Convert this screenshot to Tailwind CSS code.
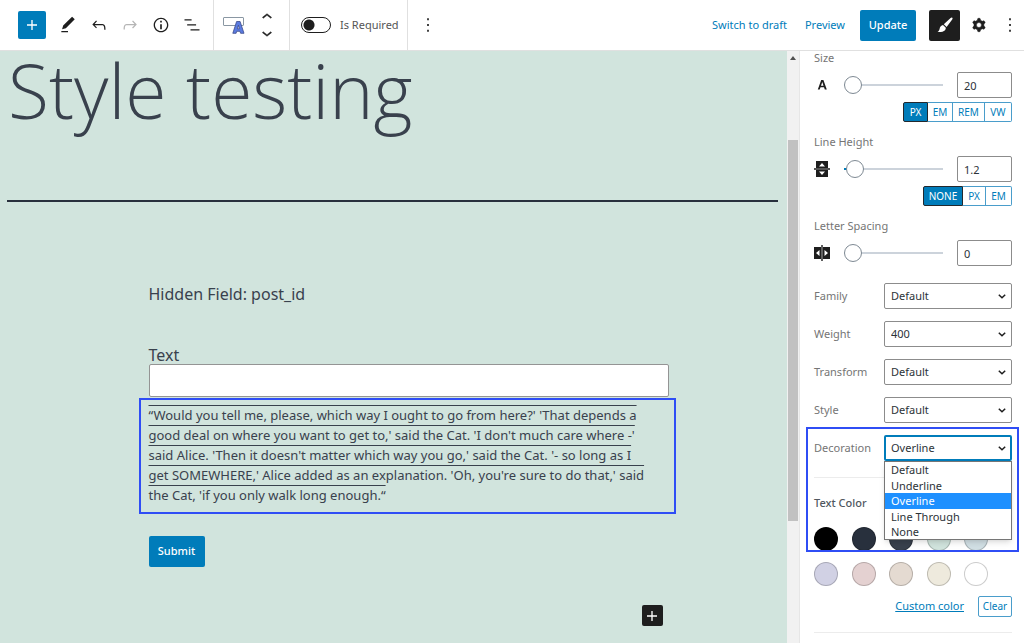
<!DOCTYPE html>
<html lang="en">
<head>
<meta charset="utf-8">
<title>Style testing</title>
<script src="https://cdn.jsdelivr.net/npm/@tailwindcss/browser@4"></script>
</head>
<body class="flex h-screen flex-col overflow-hidden bg-white font-['Noto_Sans','Open_Sans',sans-serif] text-[11px] text-[#1e1e1e]">

<header class="flex h-[51px] shrink-0 items-stretch border-b border-[#e0e0e0]">
  <div class="flex items-center pl-[18px] pr-[11px]">
    <button aria-label="Add block" class="mr-3 flex h-7 w-7 items-center justify-center rounded-[2px] bg-[#007cba] text-white">
      <svg class="h-5 w-5" viewBox="0 0 24 24" fill="currentColor"><path d="M18 11.2h-5.2V6h-1.6v5.2H6v1.6h5.2V18h1.6v-5.2H18z"/></svg>
    </button>
    <div class="flex items-center gap-[11px]">
      <button aria-label="Tools"><svg class="block h-5 w-5" viewBox="0 0 24 24" fill="currentColor"><path d="M20.1 5.1L16.9 2 6.2 12.7l-1.3 4.4 4.5-1.3L20.1 5.1zM4 20.8h8v-1.5H4v1.5z"/></svg></button>
      <button aria-label="Undo"><svg class="block h-5 w-5" viewBox="0 0 24 24" fill="currentColor"><path d="M18.3 11.7c-.6-.6-1.4-.9-2.3-.9H6.7l2.9-3.3-1.1-1-4.5 5L8.5 16l1-1-2.7-2.7H16c.5 0 .9.2 1.3.5 1 1 1 3.4 1 4.5v.3h1.5v-.2c0-1.5 0-4.3-1.5-5.7z"/></svg></button>
      <button aria-label="Redo" disabled class="text-[#b5b5b5]"><svg class="block h-5 w-5" viewBox="0 0 24 24" fill="currentColor"><path d="M15.6 6.5l-1.1 1 2.9 3.3H8c-.9 0-1.7.3-2.3.9-1.4 1.5-1.4 4.2-1.4 5.6v.2h1.5v-.3c0-1.1 0-3.5 1-4.5.3-.3.7-.5 1.3-.5h9.2L14.5 15l1.1 1.1 4.6-4.6-4.6-5z"/></svg></button>
      <button aria-label="Details"><svg class="block h-5 w-5" viewBox="0 0 24 24" fill="currentColor"><path d="M12 3.2c-4.8 0-8.8 3.9-8.8 8.8 0 4.8 3.9 8.8 8.8 8.8 4.8 0 8.8-3.9 8.8-8.8 0-4.8-4-8.8-8.8-8.8zm0 16c-4 0-7.2-3.3-7.2-7.2C4.8 8 8 4.8 12 4.8s7.2 3.3 7.2 7.2c0 4-3.2 7.2-7.2 7.2zM11 17h2v-6h-2v6zm0-8h2V7h-2v2z"/></svg></button>
      <button aria-label="List view"><svg class="block h-5 w-5" viewBox="0 0 24 24" fill="currentColor"><path d="M11.5 5.2H3v1.5h8.500V5.2zm-1.300 12v1.500H21v-1.500H10.200zm6.700-6H6.200v1.500h10.700v-1.500z"/></svg></button>
    </div>
  </div>
  <div class="flex items-center gap-3 border-l border-[#e0e0e0] pl-[9px] pr-3">
    <button aria-label="Text field"><svg class="block h-[18px] w-[22px]" viewBox="0 0 22 18"><rect x=".5" y="1.500" width="20" height="8" rx=".5" fill="#fff" stroke="#8a97a3"/><path fill="#5b7be0" stroke="#3b4a8a" stroke-width=".8" d="M9.800 17.300 13.600 5.500h3.500l3.900 11.800h-3.400l-.6-2h-3.300l-.6 2zM14.400 12.800h2l-1-3.500z"/></svg></button>
    <div class="flex flex-col">
      <button aria-label="Move up" class="h-4"><svg class="block h-5 w-5 -my-0.5" viewBox="0 0 24 24" fill="currentColor"><path d="M6.500 12.400L12 8l5.500 4.400-.9 1.200L12 10l-4.500 3.600-1-1.200z" stroke="currentColor" stroke-width=".5"/></svg></button>
      <button aria-label="Move down" class="h-4"><svg class="block h-5 w-5 -my-0.5" viewBox="0 0 24 24" fill="currentColor"><path d="M17.500 11.600L12 16l-5.500-4.400.9-1.200L12 14l4.500-3.600 1 1.200z" stroke="currentColor" stroke-width=".5"/></svg></button>
    </div>
  </div>
  <label class="flex items-center gap-[9px] border-l border-[#e0e0e0] pl-[11px] pr-2 text-[#555]">
    <input type="checkbox" role="switch" class="h-4 w-[30px] appearance-none rounded-full border border-[#1e1e1e] bg-[radial-gradient(circle_at_7px_7px,#1e1e1e_5px,transparent_6px)]">
    <span>Is Required</span>
  </label>
  <div class="flex items-center border-l border-[#e0e0e0] pl-[10px]">
    <button aria-label="Block options"><svg class="block h-5 w-5" viewBox="0 0 24 24" fill="currentColor"><path d="M11 4h2v2.300h-2zM11 10.900h2v2.200h-2zM11 17.700h2V20h-2z"/></svg></button>
  </div>
  <div class="ml-auto flex items-center pr-1">
    <button class="mr-[18px] text-[#007cba]">Switch to draft</button>
    <a href="#" class="mr-[15px] text-[#007cba]">Preview</a>
    <button class="mr-[13px] h-[31px] w-14 rounded-[2px] bg-[#007cba] font-medium text-white">Update</button>
    <button aria-label="Styles" class="mr-[9px] flex h-[31px] w-[31px] items-center justify-center rounded-[2px] bg-[#1e1e1e] text-white">
      <svg class="h-4 w-4" viewBox="0 0 16 16" fill="currentColor"><path d="M15.300.7c.5.5.3 1.100-.1 1.700L9.600 10 6.800 7.300 13.600.9c.6-.5 1.200-.7 1.700-.2zM6 8l2.800 2.800c.2 1.700-1.200 3.500-3.300 3.900-1.700.4-3.600.3-5 .3 1.200-.7 1.700-1.400 2-2.700C2.900 9.800 4.300 8.200 6 8z"/></svg>
    </button>
    <button aria-label="Settings" class="mr-[11px]"><svg class="block h-5 w-5" viewBox="0 0 24 24" fill="currentColor" fill-rule="evenodd" stroke="currentColor" stroke-width=".6"><path d="M10.289 4.836A1 1 0 0111.275 4h1.306a1 1 0 01.987.836l.244 1.466c.787.26 1.503.679 2.108 1.218l1.393-.522a1 1 0 011.216.437l.653 1.130a1 1 0 01-.23 1.273l-1.148.944a6.025 6.025 0 010 2.435l1.149.946a1 1 0 01.23 1.272l-.653 1.130a1 1 0 01-1.216.437l-1.394-.522c-.605.54-1.320.958-2.108 1.218l-.244 1.466a1 1 0 01-.987.836h-1.306a1 1 0 01-.986-.836l-.244-1.466a5.995 5.995 0 01-2.108-1.218l-1.394.522a1 1 0 01-1.217-.436l-.653-1.131a1 1 0 01.23-1.272l1.149-.946a6.026 6.026 0 010-2.435l-1.148-.944a1 1 0 01-.23-1.272l.653-1.131a1 1 0 011.217-.437l1.393.522a5.994 5.994 0 012.108-1.218l.244-1.466zM14.929 12a3 3 0 11-6 0 3 3 0 016 0z"/></svg></button>
    <button aria-label="Options"><svg class="block h-5 w-5" viewBox="0 0 24 24" fill="currentColor"><path d="M11 4h2v2.300h-2zM11 10.900h2v2.200h-2zM11 17.700h2V20h-2z"/></svg></button>
  </div>
</header>

<div class="flex min-h-0 flex-1">
  <main class="min-w-0 flex-1 bg-[#d1e4dd] pl-[7px] pr-[9px] text-[#39414d]">
    <h1 class="h-[149px] pl-px font-['Open_Sans',sans-serif] text-[75px] font-light leading-[78px]">Style testing</h1>
    <hr class="border-t-2 border-[#28303d]">
    <div class="pl-8">
    <form class="mx-auto w-[520px] pt-[80px]">
      <p class="text-[16px] leading-6">Hidden Field: post_id</p>
      <label for="text" class="mt-[38px] block text-[16px] leading-[22px]">Text</label>
      <input id="text" type="text" class="-mt-[2px] block h-[33px] w-full rounded-[2px] border border-[#949494] bg-white px-2">
      <div class="-ml-[10px] -mr-[7px] mt-px border-2 border-[#2f4df5] pb-[7px] pl-2 pt-[5px]">
        <p class="whitespace-nowrap text-[13px] leading-5 overline">“Would you tell me, please, which way I ought to go from here?' 'That depends a<br>good deal on where you want to get to,' said the Cat. 'I don't much care where -'<br>said Alice. 'Then it doesn't matter which way you go,' said the Cat. '- so long as I<br>get SOMEWHERE,' Alice added as an explanation. 'Oh, you're sure to do that,' said<br>the Cat, 'if you only walk long enough.“</p>
      </div>
      <button type="button" class="mt-[22px] block h-[31px] w-14 rounded-[2px] bg-[#007cba] text-[11px] font-medium text-white">Submit</button>
      <button type="button" aria-label="Add block" class="ml-auto mr-[6px] mt-[38px] flex h-[21px] w-[21px] items-center justify-center rounded-[2px] bg-[#1e1e1e] text-white">
        <svg class="h-5 w-5" viewBox="0 0 24 24" fill="currentColor"><path d="M18 11.200h-5.200V6h-1.600v5.200H6v1.600h5.200V18h1.600v-5.200H18z"/></svg>
      </button>
    </form>
    </div>
  </main>

  <div aria-hidden="true" class="flex w-[13px] shrink-0 flex-col items-center border-r border-[#e6e6e6] bg-[#f1f1f1]">
    <svg class="mt-[5px] h-1 w-[6px]" viewBox="0 0 6 4" fill="#505050"><path d="M3 0l3 4H0z"/></svg>
    <div class="mt-20 h-[381px] w-[10px] bg-[#c1c1c1]"></div>
  </div>

  <aside class="w-[224px] shrink-0 overflow-hidden pl-[14px] pr-3 text-[#757575]">
    <section>
      <label for="size" class="block h-[14px] leading-[14px]">Size</label>
      <div class="mt-[7px] flex h-[26px] items-center">
        <svg class="mr-[14px] h-4 w-4" viewBox="0 0 16 16" fill="#1e1e1e"><path d="M3.800 12.500 7.200 3h2.200l3.400 9.500h-2l-.8-2.300H6.500l-.8 2.300zM7 8.700h2.500L8.300 5z"/></svg>
        <input type="range" aria-label="Size slider" min="0" max="1000" value="2" class="h-[18px] w-[99px] appearance-none bg-[linear-gradient(#ccd3db,#ccd3db)] bg-[length:100%_2px] bg-center bg-no-repeat [&::-webkit-slider-thumb]:h-[18px] [&::-webkit-slider-thumb]:w-[18px] [&::-webkit-slider-thumb]:appearance-none [&::-webkit-slider-thumb]:rounded-full [&::-webkit-slider-thumb]:border [&::-webkit-slider-thumb]:border-[#7e8993] [&::-webkit-slider-thumb]:bg-white">
        <input id="size" type="text" value="20" class="ml-auto h-[26px] w-[55px] rounded-[2px] border border-[#8c8c8c] px-[6px] text-[#2c3338]">
      </div>
      <div class="mt-1 flex h-5 justify-end text-[10px] text-[#007cba]">
        <button class="w-[25px] rounded-l-[2px] border border-[#23282d] bg-[#007cba] text-white">PX</button>
        <button class="w-[25px] border-y border-r border-[#4a9dcb]">EM</button>
        <button class="w-8 border-y border-r border-[#4a9dcb]">REM</button>
        <button class="w-[27px] rounded-r-[2px] border-y border-r border-[#4a9dcb]">VW</button>
      </div>
    </section>
    <section class="mt-[13px]">
      <label for="lh" class="block h-[14px] leading-[14px]">Line Height</label>
      <div class="mt-[7px] flex h-[26px] items-center">
        <svg class="mr-[14px] h-4 w-4" viewBox="0 0 16 16"><path fill="#1e1e1e" d="M2 0h12v7H2zM2 9h12v7H2zM0 7.300h16v1.400H0z"/><path fill="#fff" d="M8 2l3 3.500H5zM8 14l3-3.500H5z"/></svg>
        <input type="range" aria-label="Line height slider" min="0" max="100" value="2" class="h-[18px] w-[99px] appearance-none bg-[linear-gradient(90deg,#007cba_6px,#ccd3db_6px)] bg-[length:100%_2px] bg-center bg-no-repeat [&::-webkit-slider-thumb]:h-[18px] [&::-webkit-slider-thumb]:w-[18px] [&::-webkit-slider-thumb]:appearance-none [&::-webkit-slider-thumb]:rounded-full [&::-webkit-slider-thumb]:border [&::-webkit-slider-thumb]:border-[#7e8993] [&::-webkit-slider-thumb]:bg-white">
        <input id="lh" type="text" value="1.2" class="ml-auto h-[26px] w-[55px] rounded-[2px] border border-[#8c8c8c] px-[6px] text-[#2c3338]">
      </div>
      <div class="mt-1 flex h-5 justify-end text-[10px] text-[#007cba]">
        <button class="w-10 rounded-l-[2px] border border-[#23282d] bg-[#007cba] text-white">NONE</button>
        <button class="w-[23px] border-y border-r border-[#4a9dcb]">PX</button>
        <button class="w-[26px] rounded-r-[2px] border-y border-r border-[#4a9dcb]">EM</button>
      </div>
    </section>
    <section class="mt-[13px]">
      <label for="ls" class="block h-[14px] leading-[14px]">Letter Spacing</label>
      <div class="mt-[7px] flex h-[26px] items-center">
        <svg class="mr-[14px] h-4 w-4" viewBox="0 0 16 16"><path fill="#1e1e1e" d="M0 2h7v12H0zM9 2h7v12H9zM7.300 0h1.400v16H7.300z"/><path fill="#fff" d="M2 8l3.500-3v6zM14 8l-3.500-3v6z"/></svg>
        <input type="range" aria-label="Letter spacing slider" min="0" max="100" value="0" class="h-[18px] w-[99px] appearance-none bg-[linear-gradient(#ccd3db,#ccd3db)] bg-[length:100%_2px] bg-center bg-no-repeat [&::-webkit-slider-thumb]:h-[18px] [&::-webkit-slider-thumb]:w-[18px] [&::-webkit-slider-thumb]:appearance-none [&::-webkit-slider-thumb]:rounded-full [&::-webkit-slider-thumb]:border [&::-webkit-slider-thumb]:border-[#7e8993] [&::-webkit-slider-thumb]:bg-white">
        <input id="ls" type="text" value="0" class="ml-auto h-[26px] w-[55px] rounded-[2px] border border-[#8c8c8c] px-[6px] text-[#2c3338]">
      </div>
    </section>

    <div class="mt-[17px] flex flex-col gap-3">
      <div class="flex items-center justify-between">
        <label for="family">Family</label>
        <div class="grid w-32 items-center">
          <select id="family" class="col-start-1 row-start-1 h-[26px] appearance-none rounded-[2px] border border-[#8c8c8c] bg-white pl-[6px] text-[#2c3338]"><option>Default</option></select>
          <svg class="pointer-events-none col-start-1 row-start-1 mr-[6px] h-[5px] w-2 justify-self-end" viewBox="0 0 8 5" fill="none" stroke="#1e1e1e" stroke-width="1.500"><path d="M.8.8 4 3.800 7.200.8"/></svg>
        </div>
      </div>
      <div class="flex items-center justify-between">
        <label for="weight">Weight</label>
        <div class="grid w-32 items-center">
          <select id="weight" class="col-start-1 row-start-1 h-[26px] appearance-none rounded-[2px] border border-[#8c8c8c] bg-white pl-[6px] text-[#2c3338]"><option>400</option></select>
          <svg class="pointer-events-none col-start-1 row-start-1 mr-[6px] h-[5px] w-2 justify-self-end" viewBox="0 0 8 5" fill="none" stroke="#1e1e1e" stroke-width="1.500"><path d="M.8.8 4 3.800 7.200.8"/></svg>
        </div>
      </div>
      <div class="flex items-center justify-between">
        <label for="transform">Transform</label>
        <div class="grid w-32 items-center">
          <select id="transform" class="col-start-1 row-start-1 h-[26px] appearance-none rounded-[2px] border border-[#8c8c8c] bg-white pl-[6px] text-[#2c3338]"><option>Default</option></select>
          <svg class="pointer-events-none col-start-1 row-start-1 mr-[6px] h-[5px] w-2 justify-self-end" viewBox="0 0 8 5" fill="none" stroke="#1e1e1e" stroke-width="1.500"><path d="M.8.8 4 3.800 7.200.8"/></svg>
        </div>
      </div>
      <div class="flex items-center justify-between">
        <label for="fstyle">Style</label>
        <div class="grid w-32 items-center">
          <select id="fstyle" class="col-start-1 row-start-1 h-[26px] appearance-none rounded-[2px] border border-[#8c8c8c] bg-white pl-[6px] text-[#2c3338]"><option>Default</option></select>
          <svg class="pointer-events-none col-start-1 row-start-1 mr-[6px] h-[5px] w-2 justify-self-end" viewBox="0 0 8 5" fill="none" stroke="#1e1e1e" stroke-width="1.500"><path d="M.8.8 4 3.800 7.200.8"/></svg>
        </div>
      </div>
    </div>

    <div class="relative mt-3">
      <div class="flex items-center justify-between">
        <label for="decoration">Decoration</label>
        <div class="relative grid w-32 items-center">
          <select id="decoration" class="col-start-1 row-start-1 h-[26px] appearance-none rounded-[2px] border-2 border-[#007cba] bg-white pl-[5px] text-[#2c3338]"><option>Default</option><option>Underline</option><option selected>Overline</option><option>Line Through</option><option>None</option></select>
          <svg class="pointer-events-none col-start-1 row-start-1 mr-[6px] h-[5px] w-2 justify-self-end" viewBox="0 0 8 5" fill="none" stroke="#1e1e1e" stroke-width="1.500"><path d="M.8.8 4 3.800 7.200.8"/></svg>
          <ul role="listbox" aria-label="Decoration options" class="absolute inset-x-0 top-full z-10 border border-[#767676] bg-white leading-[16px] text-[#2c3338] shadow-md">
            <li role="option" class="pl-[6px]">Default</li>
            <li role="option" class="pl-[6px] leading-[15px]">Underline</li>
            <li role="option" aria-selected="true" class="bg-[#1e90ff] pl-[6px] text-white">Overline</li>
            <li role="option" class="pl-[6px] leading-[15px]">Line Through</li>
            <li role="option" class="pl-[6px] leading-[15px]">None</li>
          </ul>
        </div>
      </div>
      <hr class="mt-4 border-[#ececec]">
      <h2 class="mt-[18px] h-[14px] font-medium leading-[14px] text-[#50575e]">Text Color</h2>
      <div class="mt-[17px] flex w-[174px] justify-between">
        <button aria-label="Black" class="h-6 w-6 rounded-full border border-black/20 bg-black"></button>
        <button aria-label="Dark gray" class="h-6 w-6 rounded-full border border-black/20 bg-[#28303d]"></button>
        <button aria-label="Gray" class="h-6 w-6 rounded-full border border-black/20 bg-[#39414d]"></button>
        <button aria-label="Green" class="h-6 w-6 rounded-full border border-black/20 bg-[#d1e4dd]"></button>
        <button aria-label="Blue" class="h-6 w-6 rounded-full border border-black/20 bg-[#d1dfe4]"></button>
      </div>
      <div aria-hidden="true" class="pointer-events-none absolute -bottom-px -left-2 -right-[7px] -top-2 border-2 border-[#2f4df5]"></div>
    </div>
    <div class="mt-[11px] flex w-[174px] justify-between">
      <button aria-label="Purple" class="h-6 w-6 rounded-full border border-black/20 bg-[#d1d1e4]"></button>
      <button aria-label="Red" class="h-6 w-6 rounded-full border border-black/20 bg-[#e4d1d1]"></button>
      <button aria-label="Orange" class="h-6 w-6 rounded-full border border-black/20 bg-[#e4dad1]"></button>
      <button aria-label="Yellow" class="h-6 w-6 rounded-full border border-black/20 bg-[#eeeadd]"></button>
      <button aria-label="White" class="h-6 w-6 rounded-full border border-black/20 bg-white"></button>
    </div>
    <div class="mt-[10px] flex items-center justify-end gap-[14px] text-[#007cba]">
      <button class="underline">Custom color</button>
      <button class="h-[21px] w-[34px] rounded-[2px] border border-[#4a9dcb] text-[10px]">Clear</button>
    </div>
    <hr class="mt-[15px] border-[#ececec]">
  </aside>
</div>
</body>
</html>
